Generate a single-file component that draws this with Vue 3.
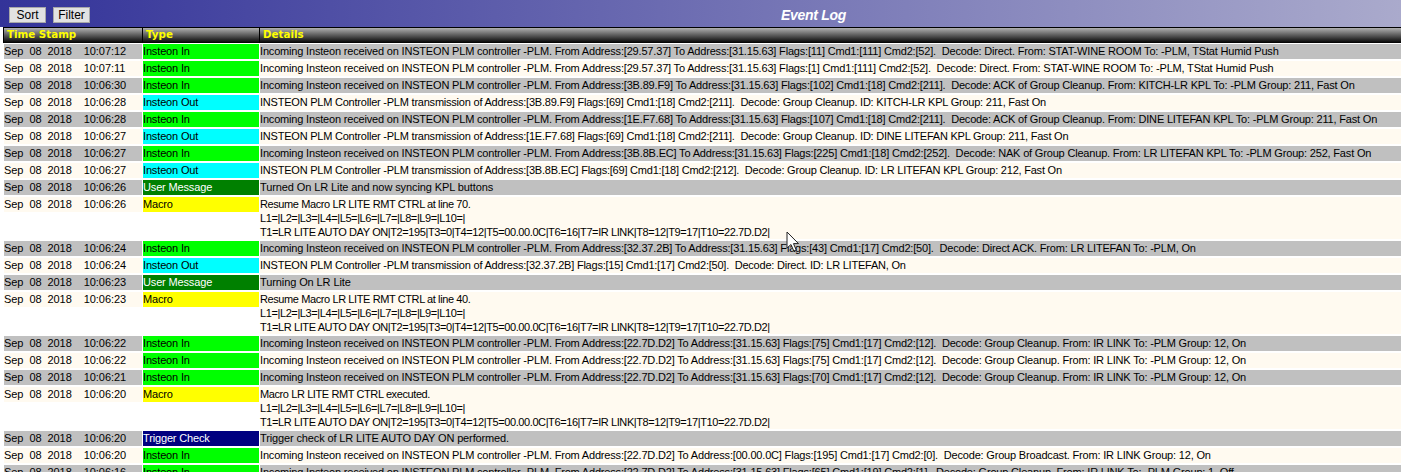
<script setup>
const TS = 'Sep\u00a0\u00a008\u00a0\u00a02018'
const inA = (from, to, rest) => `Incoming Insteon received on INSTEON PLM controller -PLM. From Address:[${from}] To Address:[${to}] ${rest}`
const rows = [
  { t: '10:07:12', k: 'in', d: [inA('29.57.37', '31.15.63', 'Flags:[11] Cmd1:[111] Cmd2:[52].  Decode: Direct. From: STAT-WINE ROOM To: -PLM, TStat Humid Push')] },
  { t: '10:07:11', k: 'in', d: [inA('29.57.37', '31.15.63', 'Flags:[1] Cmd1:[111] Cmd2:[52].  Decode: Direct. From: STAT-WINE ROOM To: -PLM, TStat Humid Push')] },
  { t: '10:06:30', k: 'in', d: [inA('3B.89.F9', '31.15.63', 'Flags:[102] Cmd1:[18] Cmd2:[211].  Decode: ACK of Group Cleanup. From: KITCH-LR KPL To: -PLM Group: 211, Fast On')] },
  { t: '10:06:28', k: 'out', d: ['INSTEON PLM Controller -PLM transmission of Address:[3B.89.F9] Flags:[69] Cmd1:[18] Cmd2:[211].  Decode: Group Cleanup. ID: KITCH-LR KPL Group: 211, Fast On'] },
  { t: '10:06:28', k: 'in', d: [inA('1E.F7.68', '31.15.63', 'Flags:[107] Cmd1:[18] Cmd2:[211].  Decode: ACK of Group Cleanup. From: DINE LITEFAN KPL To: -PLM Group: 211, Fast On')] },
  { t: '10:06:27', k: 'out', d: ['INSTEON PLM Controller -PLM transmission of Address:[1E.F7.68] Flags:[69] Cmd1:[18] Cmd2:[211].  Decode: Group Cleanup. ID: DINE LITEFAN KPL Group: 211, Fast On'] },
  { t: '10:06:27', k: 'in', d: [inA('3B.8B.EC', '31.15.63', 'Flags:[225] Cmd1:[18] Cmd2:[252].  Decode: NAK of Group Cleanup. From: LR LITEFAN KPL To: -PLM Group: 252, Fast On')] },
  { t: '10:06:27', k: 'out', d: ['INSTEON PLM Controller -PLM transmission of Address:[3B.8B.EC] Flags:[69] Cmd1:[18] Cmd2:[212].  Decode: Group Cleanup. ID: LR LITEFAN KPL Group: 212, Fast On'] },
  { t: '10:06:26', k: 'user', d: ['Turned On LR Lite and now syncing KPL buttons'] },
  { t: '10:06:26', k: 'macro', d: ['Resume Macro LR LITE RMT CTRL at line 70.', 'L1=|L2=|L3=|L4=|L5=|L6=|L7=|L8=|L9=|L10=|', 'T1=LR LITE AUTO DAY ON|T2=195|T3=0|T4=12|T5=00.00.0C|T6=16|T7=IR LINK|T8=12|T9=17|T10=22.7D.D2|'] },
  { t: '10:06:24', k: 'in', d: [inA('32.37.2B', '31.15.63', 'Flags:[43] Cmd1:[17] Cmd2:[50].  Decode: Direct ACK. From: LR LITEFAN To: -PLM, On')] },
  { t: '10:06:24', k: 'out', d: ['INSTEON PLM Controller -PLM transmission of Address:[32.37.2B] Flags:[15] Cmd1:[17] Cmd2:[50].  Decode: Direct. ID: LR LITEFAN, On'] },
  { t: '10:06:23', k: 'user', d: ['Turning On LR Lite'] },
  { t: '10:06:23', k: 'macro', d: ['Resume Macro LR LITE RMT CTRL at line 40.', 'L1=|L2=|L3=|L4=|L5=|L6=|L7=|L8=|L9=|L10=|', 'T1=LR LITE AUTO DAY ON|T2=195|T3=0|T4=12|T5=00.00.0C|T6=16|T7=IR LINK|T8=12|T9=17|T10=22.7D.D2|'] },
  { t: '10:06:22', k: 'in', d: [inA('22.7D.D2', '31.15.63', 'Flags:[75] Cmd1:[17] Cmd2:[12].  Decode: Group Cleanup. From: IR LINK To: -PLM Group: 12, On')] },
  { t: '10:06:22', k: 'in', d: [inA('22.7D.D2', '31.15.63', 'Flags:[75] Cmd1:[17] Cmd2:[12].  Decode: Group Cleanup. From: IR LINK To: -PLM Group: 12, On')] },
  { t: '10:06:21', k: 'in', d: [inA('22.7D.D2', '31.15.63', 'Flags:[70] Cmd1:[17] Cmd2:[12].  Decode: Group Cleanup. From: IR LINK To: -PLM Group: 12, On')] },
  { t: '10:06:20', k: 'macro', d: ['Macro LR LITE RMT CTRL executed.', 'L1=|L2=|L3=|L4=|L5=|L6=|L7=|L8=|L9=|L10=|', 'T1=LR LITE AUTO DAY ON|T2=195|T3=0|T4=12|T5=00.00.0C|T6=16|T7=IR LINK|T8=12|T9=17|T10=22.7D.D2|'] },
  { t: '10:06:20', k: 'trigger', d: ['Trigger check of LR LITE AUTO DAY ON performed.'] },
  { t: '10:06:20', k: 'in', d: [inA('22.7D.D2', '00.00.0C', 'Flags:[195] Cmd1:[17] Cmd2:[0].  Decode: Group Broadcast. From: IR LINK Group: 12, On')] },
  { t: '10:06:16', k: 'in', d: [inA('22.7D.D2', '31.15.63', 'Flags:[65] Cmd1:[19] Cmd2:[1].  Decode: Group Cleanup. From: IR LINK To: -PLM Group: 1, Off')] }
]
const labels = { in: 'Insteon In', out: 'Insteon Out', user: 'User Message', macro: 'Macro', trigger: 'Trigger Check' }
</script>

<template>
  <div class="page">
    <div class="topbar">
      <button class="btn sort">Sort</button>
      <button class="btn filter">Filter</button>
      <div class="title">Event Log</div>
    </div>
    <div class="thead">
      <div class="th">Time Stamp</div>
      <div class="th">Type</div>
      <div class="th">Details</div>
    </div>
    <div class="rows">
      <div v-for="(r, i) in rows" :key="i" class="row" :class="[i % 2 ? 'even' : 'odd', 'kind-' + r.k]">
        <div class="cell time">{{ TS }}&nbsp;&nbsp;&nbsp;&nbsp;{{ r.t }}</div>
        <div class="cell type" :class="r.k">{{ labels[r.k] }}</div>
        <div class="cell details"><div v-for="(l, j) in r.d" :key="j">{{ l }}</div></div>
      </div>
    </div>
    <svg class="cursor" width="14" height="21" viewBox="0 0 14 21">
      <path d="M1 1 L1 17 L5 13.5 L7.8 20 L10.2 19 L7.5 12.6 L12.5 12.6 Z" fill="#fff" stroke="#222" stroke-width="1"/>
    </svg>
  </div>
</template>

<style scoped>
.page {
  position: relative;
  width: 1401px;
  height: 472px;
  overflow: hidden;
  background: #fff;
  font-family: "Liberation Sans", Arial, sans-serif;
  font-size: 11px;
  color: #000;
}
.topbar {
  height: 27px;
  display: flex;
  align-items: flex-start;
  padding: 7px 0 0 9px;
  box-sizing: border-box;
  background: linear-gradient(90deg, #333399, #aaaacc);
}
.btn {
  height: 16px;
  padding: 0;
  box-sizing: border-box;
  border: 1px solid #a8a8a8;
  background: #e2e2e2;
  font: 12px/14px "Liberation Sans", Arial, sans-serif;
  color: #000;
}
.sort { width: 37px; }
.filter { width: 37px; margin-left: 7px; }
.title {
  margin: 0 0 0 691px;
  color: #fff;
  font: italic bold 14px/16px "Liberation Sans", Arial, sans-serif;
  letter-spacing: -0.3px;
}
.thead {
  display: grid;
  grid-template-columns: 138px 116px 1fr;
  column-gap: 1px;
  height: 15px;
  margin-left: 3px;
  border-top: 1px solid #000;
  border-left: 1px solid #000;
  background: #000;
}
.th {
  padding-left: 3px;
  color: #ffff00;
  font: bold 10.3px/13px "DejaVu Sans", Verdana, sans-serif;
  background: linear-gradient(180deg, #b0b0b0, #000);
}
.rows {
  display: flex;
  flex-direction: column;
  row-gap: 2px;
  margin: 1px 0 0 4px;
}
.row {
  display: grid;
  grid-template-columns: 138px 116px 1fr;
  column-gap: 1px;
  align-items: start;
  line-height: 14px;
}
.cell {
  white-space: pre;
  min-height: 15px;
}
.time { letter-spacing: -0.06px; }
.type { letter-spacing: -0.15px; }
.odd .time, .odd .details { background: #c0c0c0; }
.even .time, .even .details { background: #fffaf0; }
.details { align-self: stretch; }
.kind-in .details { letter-spacing: -0.18px; }
.kind-out .details { letter-spacing: -0.22px; }
.kind-macro .details { letter-spacing: -0.4px; }
.kind-user .details { letter-spacing: -0.1px; }
.kind-trigger .details { letter-spacing: -0.13px; }
.in { background: #00ff00; }
.out { background: #00ffff; }
.macro { background: #ffff00; }
.user { background: #008000; color: #fff; }
.trigger { background: #000080; color: #fff; }
.cursor {
  position: absolute;
  left: 786px;
  top: 231px;
}
</style>

<style>
html, body { margin: 0; overflow: hidden; background: #fff; }
</style>
